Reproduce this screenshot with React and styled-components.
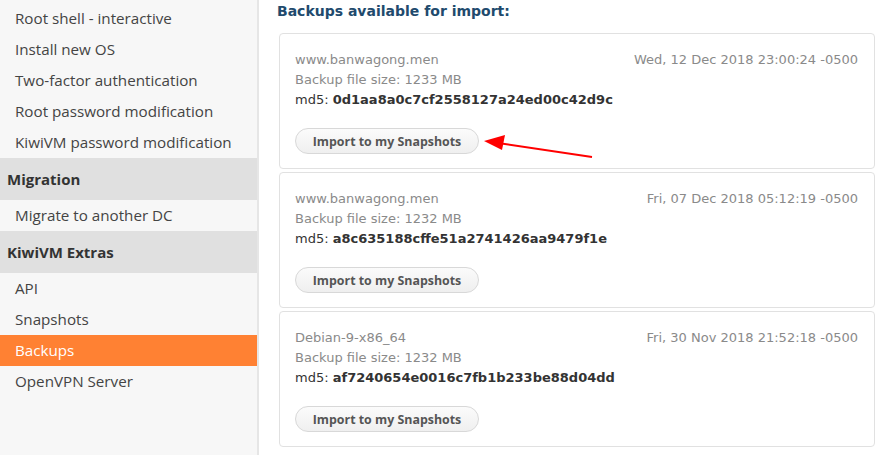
import React from "react";
import styled, { createGlobalStyle } from "styled-components";

const Global = createGlobalStyle`
  html, body { margin: 0; padding: 0; background: #fff; }
  body { width: 884px; height: 455px; overflow: hidden; }
  #root { height: 455px; }
`;

const Page = styled.div`
  display: flex;
  height: 455px;
  position: relative;
  overflow: hidden;
`;

const Sidebar = styled.nav`
  width: 257px;
  flex: 0 0 257px;
  background: #f7f7f7;
  border-right: 2px solid #e6e6e6;
  padding-top: 3px;
  box-sizing: content-box;
  font-family: "Open Sans", sans-serif;
`;

const Item = styled.div`
  height: 31px;
  line-height: 31px;
  padding-left: 15px;
  font-size: 15.2px;
  color: ${(p) => (p.$active ? "#fff" : "#444")};
  background: ${(p) => (p.$active ? "#ff8133" : "transparent")};
  white-space: nowrap;
`;

const Section = styled.div`
  height: 42px;
  line-height: 42px;
  padding-left: 7px;
  font-size: 15px;
  font-weight: 700;
  color: #333;
  background: #e0e0e0;
`;

const Main = styled.main`
  flex: 1;
  padding: 0 9px 0 20px;
  font-family: "DejaVu Sans", sans-serif;
`;

const Title = styled.h2`
  margin: 0 0 9px -2px;
  height: 24px;
  line-height: 22px;
  font-size: 14px;
  font-weight: 700;
  color: #214a6d;
`;

const Cards = styled.div`
  display: flex;
  flex-direction: column;
  gap: 3px;
`;

const Card = styled.div`
  height: 136px;
  box-sizing: border-box;
  border: 1px solid #e1e1e1;
  border-radius: 4px;
  padding: 16px 16px 0 15px;
  font-size: 13px;
`;

const Row = styled.div`
  display: flex;
  justify-content: space-between;
  line-height: 20px;
  color: ${(p) => (p.$dark ? "#333" : "#8a8a8a")};
  white-space: nowrap;
`;

const Hash = styled.b`
  font-weight: 700;
  color: #333;
`;

const Button = styled.button`
  display: block;
  margin-top: 18px;
  height: 26px;
  width: 184px;
  border: 1px solid #d8d8d8;
  border-radius: 13px;
  background: linear-gradient(#fbfbfb, #efefef);
  font-family: "Open Sans", sans-serif;
  font-weight: 700;
  font-size: 12.4px;
  color: #555;
  padding: 0;
`;

const Arrow = styled.svg`
  position: absolute;
  left: 480px;
  top: 130px;
  width: 120px;
  height: 35px;
  overflow: visible;
`;

const menu1 = [
  "Root shell - interactive",
  "Install new OS",
  "Two-factor authentication",
  "Root password modification",
  "KiwiVM password modification",
];

const backups = [
  {
    name: "www.banwagong.men",
    date: "Wed, 12 Dec 2018 23:00:24 -0500",
    size: "1233 MB",
    md5: "0d1aa8a0c7cf2558127a24ed00c42d9c",
  },
  {
    name: "www.banwagong.men",
    date: "Fri, 07 Dec 2018 05:12:19 -0500",
    size: "1232 MB",
    md5: "a8c635188cffe51a2741426aa9479f1e",
  },
  {
    name: "Debian-9-x86_64",
    date: "Fri, 30 Nov 2018 21:52:18 -0500",
    size: "1232 MB",
    md5: "af7240654e0016c7fb1b233be88d04dd",
  },
];

export default function App() {
  return (
    <Page>
      <Global />
      <Sidebar>
        {menu1.map((m) => (
          <Item key={m}>{m}</Item>
        ))}
        <Section>Migration</Section>
        <Item>Migrate to another DC</Item>
        <Section>KiwiVM Extras</Section>
        <Item>API</Item>
        <Item>Snapshots</Item>
        <Item $active>Backups</Item>
        <Item>OpenVPN Server</Item>
      </Sidebar>
      <Main>
        <Title>Backups available for import:</Title>
        <Cards>
          {backups.map((b, i) => (
            <Card key={i}>
              <Row>
                <span>{b.name}</span>
                <span>{b.date}</span>
              </Row>
              <Row>Backup file size: {b.size}</Row>
              <Row $dark>
                <span>
                  md5: <Hash>{b.md5}</Hash>
                </span>
              </Row>
              <Button>Import to my Snapshots</Button>
            </Card>
          ))}
        </Cards>
      </Main>
      <Arrow viewBox="0 0 120 35">
        <line x1="112" y1="27" x2="18" y2="13" stroke="#f00" strokeWidth="2" />
        <polygon points="4,11 25,5 22,20" fill="#f00" />
      </Arrow>
    </Page>
  );
}
